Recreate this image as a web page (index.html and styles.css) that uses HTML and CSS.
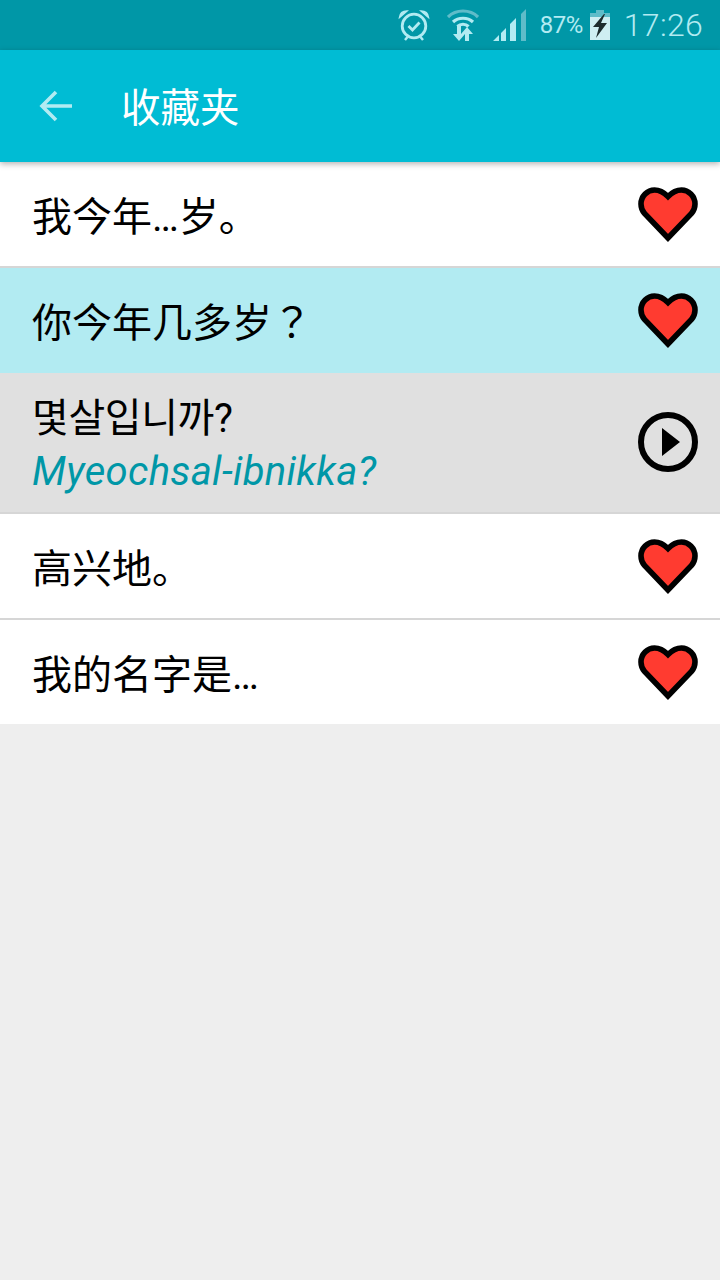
FILE: index.html
```html
<!DOCTYPE html>
<html lang="zh">
<head>
<meta charset="utf-8">
<title>收藏夹</title>
<link rel="stylesheet" href="styles.css">
</head>
<body>
<div class="status">
  <svg class="ic-alarm" width="32" height="32" viewBox="0 0 32 32"><g fill="none" stroke="#b2ebf2"><circle cx="16" cy="17" r="11.800" stroke-width="2.800"/><path d="M10.500 17l4 4 7-7.500" stroke-width="2.800"/><path d="M7 31l2.500-3M25 31l-2.500-3" stroke-width="2.500"/></g><path d="M1.500 8.500C2 4 5 2 9 2zM30.500 8.500C30 4 27 2 23 2z" fill="#b2ebf2" stroke="#b2ebf2" stroke-width="1.500"/></svg>
  <svg class="ic-wifi" width="32" height="32" viewBox="0 0 32 32"><g fill="none" stroke-width="3.200"><path d="M1 8C9 0 23 0 31 8" stroke="#5fbcc9"/><path d="M6 13C11.500 8 20.500 8 26 13" stroke="#b2ebf2"/><path d="M10.500 17.500C13.500 14.500 18.500 14.500 21.500 17.500" stroke="#b2ebf2"/></g><path d="M10 17h4v8h4l-6 7-6-7h4zM20 18l6 7h-4v7h-4v-7h-4z" fill="#b2ebf2"/></svg>
  <svg class="ic-signal" width="33" height="32" viewBox="0 0 33 32"><path d="M0 32l6-6v6zM8 32V24l5-5v13zM17 32V15l6-6v23z" fill="#b2ebf2"/><path d="M28 32V5l5-5v32z" fill="#5fbcc9"/></svg>
  <span class="pct">87%</span>
  <svg class="ic-batt" width="20" height="30" viewBox="0 0 20 30"><path d="M6 0h8v3H6z" fill="#5fbcc9"/><path d="M0 3h20v4H0z" fill="#5fbcc9"/><path d="M0 7h20v23H0z" fill="#cfeef2"/><path d="M14 4L3 17h6l-3 11 11-15h-6l4-9z" fill="#1d2b2d"/></svg>
  <span class="time">17:26</span>
</div>
<header class="appbar">
  <svg class="back" width="36" height="32" viewBox="0 0 36 32"><path d="M34 16H4M18 2L4 16l14 14" fill="none" stroke="#b2ebf2" stroke-width="3.600"/></svg>
  <h1 class="title">收藏夹</h1>
</header>
<main class="list">
  <div class="row"><span class="txt">我今年<span class="el">…</span>岁。</span>
    <svg class="ic" viewBox="0 0 60 56"><path d="M30 51L6.500 26.500C4 23.500 3 20.500 3 17 3 9 9.500 3 16.500 3 21.500 3 26.500 6 30 9.500 33.500 6 38.500 3 43.500 3 50.500 3 57 9 57 17 57 20.500 56 23.500 53.500 26.500Z" fill="#ff3b30" stroke="#000" stroke-width="5.600"/></svg></div>
  <div class="row sel"><span class="txt">你今年几多岁<span class="full" lang="ja">？</span></span>
    <svg class="ic" viewBox="0 0 60 56"><path d="M30 51L6.500 26.500C4 23.500 3 20.500 3 17 3 9 9.500 3 16.500 3 21.500 3 26.500 6 30 9.500 33.500 6 38.500 3 43.500 3 50.500 3 57 9 57 17 57 20.500 56 23.500 53.500 26.500Z" fill="#ff3b30" stroke="#000" stroke-width="5.600"/></svg></div>
  <div class="row open"><div class="pair"><span class="ko">몇살입니까?</span><span class="rom">Myeochsal-ibnikka?</span></div>
    <svg class="ic play" viewBox="0 0 60 60"><circle cx="30" cy="30" r="27" fill="none" stroke="#000" stroke-width="6"/><path d="M24 16l18 14-18 14z" fill="#000"/></svg></div>
  <div class="row"><span class="txt">高兴地。</span>
    <svg class="ic" viewBox="0 0 60 56"><path d="M30 51L6.500 26.500C4 23.500 3 20.500 3 17 3 9 9.500 3 16.500 3 21.500 3 26.500 6 30 9.500 33.500 6 38.500 3 43.500 3 50.500 3 57 9 57 17 57 20.500 56 23.500 53.500 26.500Z" fill="#ff3b30" stroke="#000" stroke-width="5.600"/></svg></div>
  <div class="row last"><span class="txt">我的名字是<span class="el">…</span></span>
    <svg class="ic" viewBox="0 0 60 56"><path d="M30 51L6.500 26.500C4 23.500 3 20.500 3 17 3 9 9.500 3 16.500 3 21.500 3 26.500 6 30 9.500 33.500 6 38.500 3 43.500 3 50.500 3 57 9 57 17 57 20.500 56 23.500 53.500 26.500Z" fill="#ff3b30" stroke="#000" stroke-width="5.600"/></svg></div>
</main>
</body>
</html>
```
FILE: styles.css
```css
* { box-sizing: border-box; }
html, body { margin: 0; height: 100%; }
body { width: 720px; height: 1280px; overflow: hidden; background: #eeeeee; font-family: Roboto, "Noto Sans CJK SC", sans-serif; color: #000; }
.status { height: 50px; background: #0097a7; display: flex; align-items: center; justify-content: flex-end; padding-right: 17px; color: #b2ebf2; }
.ic-alarm { margin-right: 17px; }
.ic-wifi { margin-right: 14px; }
.ic-signal { margin-right: 14px; }
.pct { font-size: 24px; letter-spacing: -0.5px; margin-right: 7px; }
.ic-batt { margin-right: 14px; }
.time { font-size: 32px; font-weight: 300; letter-spacing: 0.3px; }
.appbar { height: 112px; background: #00bcd4; display: flex; align-items: center; padding-left: 38px; box-shadow: 0 2px 6px rgba(0,0,0,.3); position: relative; z-index: 1; }
.back { margin-right: 47px; }
.title { margin: 0 0 2px; font-size: 39.500px; line-height: 56px; font-weight: 400; color: #fff; font-family: "Noto Sans CJK SC", sans-serif; }
.list { display: flex; flex-direction: column; }
.row { min-height: 106px; background: #fff; border-bottom: 2px solid #d6d6d6; display: flex; align-items: center; justify-content: space-between; padding: 0 22px 0 32px; }
.row.sel { background: #b2ebf2; border-bottom: 0; min-height: 105px; }
.row.open { background: #e0e0e0; min-height: 141px; }
.row.last { border-bottom: 0; min-height: 104px; }
.txt { font-size: 40px; line-height: 56px; font-family: "Noto Sans CJK SC", sans-serif; }
.sel .txt { padding-bottom: 2px; }
.el { font-family: Roboto, sans-serif; line-height: 1; }
.full { font-family: "Noto Sans CJK JP", sans-serif; line-height: 1; }
.pair { display: flex; flex-direction: column; }
.ko { font-size: 40px; line-height: 56px; padding-top: 2px; letter-spacing: -0.4px; font-family: Roboto, "Noto Sans CJK KR", sans-serif; }
.rom { font-size: 40px; line-height: 50px; letter-spacing: 0.33px; font-style: italic; color: #0097a7; }
.ic { width: 60px; height: 56px; margin-top: 2px; }
.sel .ic { margin-top: 1px; }
.play { height: 60px; margin: 0 0 2px; }
```
